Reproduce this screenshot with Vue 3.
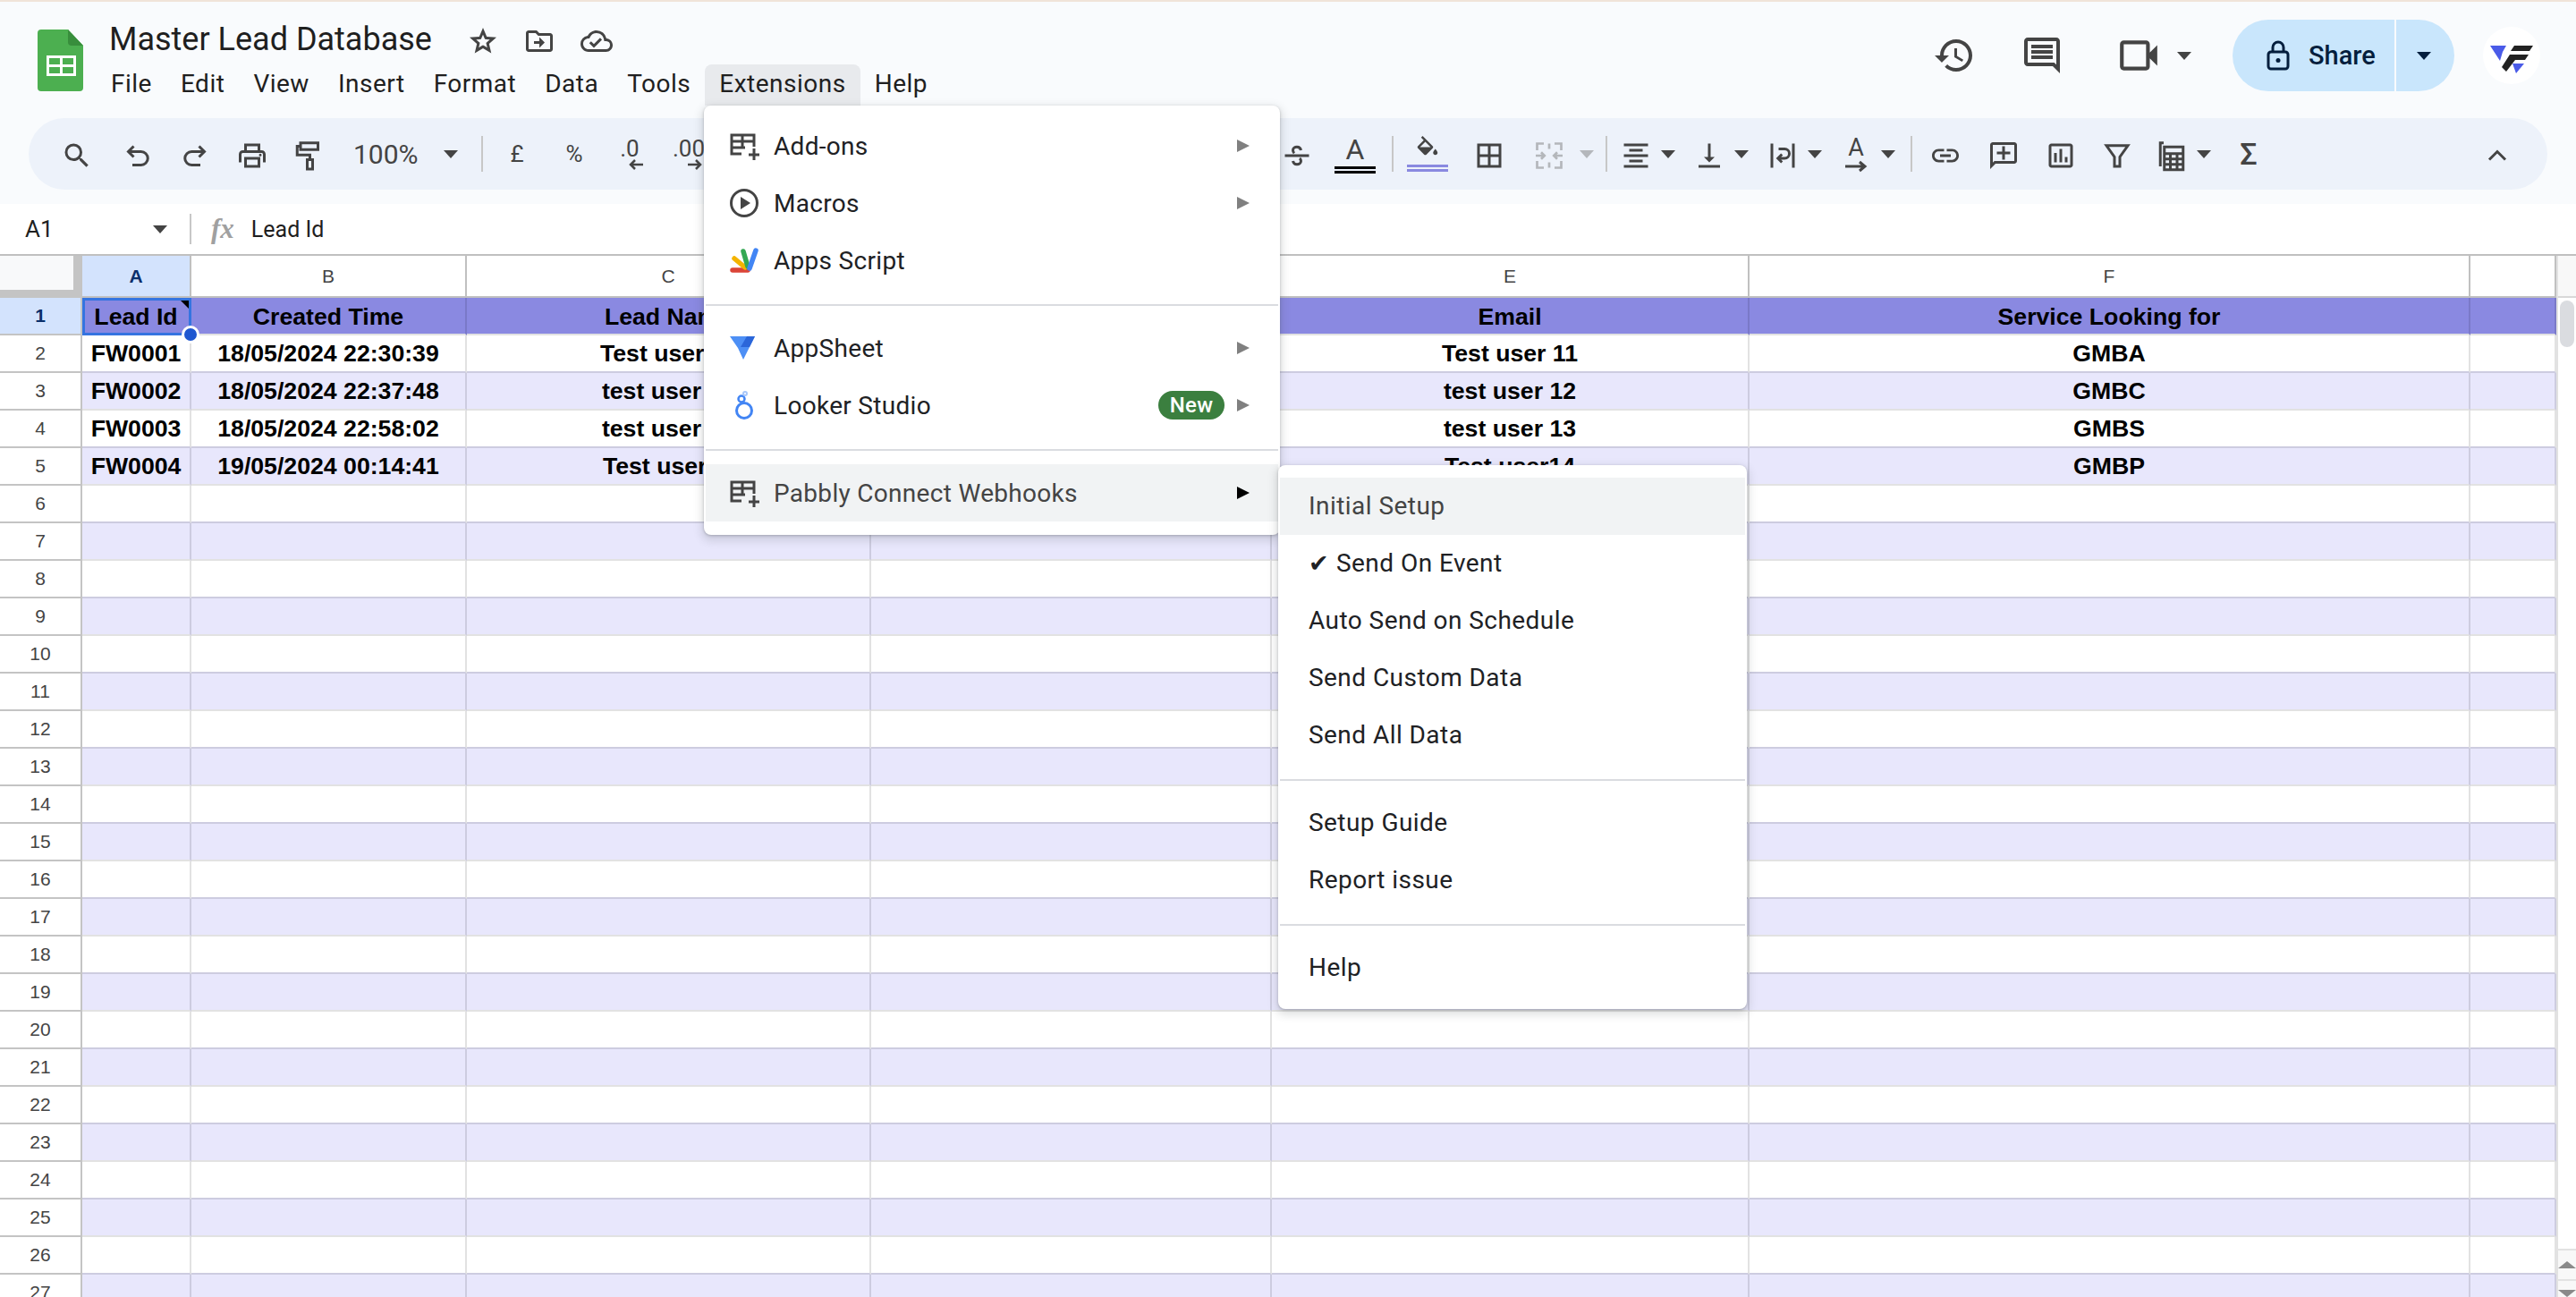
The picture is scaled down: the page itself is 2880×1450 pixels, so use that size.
<script setup>
const navItems = ['File', 'Edit', 'View', 'Insert', 'Format', 'Data', 'Tools', 'Extensions', 'Help']

const icons = {
  search: 'M15.5 14h-.79l-.28-.27A6.471 6.471 0 0 0 16 9.5 6.5 6.5 0 1 0 9.5 16c1.61 0 3.09-.59 4.23-1.57l.27.28v.79l5 4.99L20.49 19l-4.99-5zm-6 0C7.01 14 5 11.99 5 9.5S7.01 5 9.5 5 14 7.01 14 9.5 11.99 14 9.5 14z',
  print: 'M19 8h-1V3H6v5H5c-1.66 0-3 1.34-3 3v6h4v4h12v-4h4v-6c0-1.66-1.34-3-3-3zM8 5h8v3H8V5zm8 14H8v-4h8v4zm2-2v-4H6v4H4v-6c0-.55.45-1 1-1h14c.55 0 1 .45 1 1v6h-2zm0-6.5a1 1 0 1 0 0 2 1 1 0 0 0 0-2z',
  fill: 'M16.56 8.94L7.62 0 6.21 1.41l2.38 2.38-5.15 5.15c-.59.59-.59 1.54 0 2.12l5.5 5.5c.29.29.68.44 1.06.44s.77-.15 1.06-.44l5.5-5.5c.59-.58.59-1.53 0-2.12zM5.21 10L10 5.21 14.79 10H5.21zM19 11.5s-2 2.17-2 3.5c0 1.1.9 2 2 2s2-.9 2-2c0-1.33-2-3.5-2-3.5z',
  borders: 'M3 3v18h18V3H3zm8 16H5v-6h6v6zm0-8H5V5h6v6zm8 8h-6v-6h6v6zm0-8h-6V5h6v6z',
  align: 'M7 15v2h10v-2H7zm-4 6h18v-2H3v2zm0-8h18v-2H3v2zm4-6v2h10V7H7zM3 3v2h18V3H3z',
  valign: 'M16 13h-3V3h-2v10H8l4 4 4-4zM4 19v2h16v-2H4z',
  link: 'M3.9 12c0-1.71 1.39-3.1 3.1-3.1h4V7H7c-2.76 0-5 2.24-5 5s2.24 5 5 5h4v-1.9H7c-1.71 0-3.1-1.39-3.1-3.1zM8 13h8v-2H8v2zm9-6h-4v1.9h4c1.71 0 3.1 1.39 3.1 3.1s-1.39 3.1-3.1 3.1h-4V17h4c2.76 0 5-2.24 5-5s-2.24-5-5-5z',
  comment: 'M2 4c0-1.1.9-2 2-2h16c1.1 0 2 .9 2 2v12c0 1.1-.9 2-2 2H6l-4 4V4zm2 13.17L5.17 16H20V4H4v13.17zM11 5h2v4h4v2h-4v4h-2v-4H7V9h4z',
  chart: 'M19 3H5c-1.1 0-2 .9-2 2v14c0 1.1.9 2 2 2h14c1.1 0 2-.9 2-2V5c0-1.1-.9-2-2-2zm0 16H5V5h14v14zM7 10h2v7H7zm4-3h2v10h-2zm4 6h2v4h-2z',
  history: 'M13 3c-4.97 0-9 4.03-9 9H1l3.89 3.89.07.14L9 12H6c0-3.87 3.13-7 7-7s7 3.13 7 7-3.13 7-7 7c-1.93 0-3.68-.79-4.94-2.06l-1.42 1.42C8.27 19.99 10.51 21 13 21c4.97 0 9-4.03 9-9s-4.03-9-9-9zm-1 5v5l4.28 2.54.72-1.21-3.5-2.08V8H12z',
  chat: 'M21.99 4c0-1.1-.89-2-1.99-2H4c-1.1 0-2 .9-2 2v12c0 1.1.9 2 2 2h14l4 4-.01-18zM20 4v13.17L18.83 16H4V4h16zM6 12h12v2H6zm0-3h12v2H6zm0-3h12v2H6z',
  meet: 'M18 10.48V6c0-1.1-.9-2-2-2H4c-1.1 0-2 .9-2 2v12c0 1.1.9 2 2 2h12c1.1 0 2-.9 2-2v-4.48l4 3.98v-11l-4 3.98zm-2-.79V18H4V6h12v3.69z',
  star: 'M12 7.13l.97 2.29.47 1.11 1.2.1 2.47.21-1.88 1.63-.91.79.27 1.18.56 2.41-2.12-1.28-1.03-.64-1.03.62-2.12 1.28.56-2.41.27-1.18-.91-.79-1.88-1.63 2.47-.21 1.2-.1.47-1.11.97-2.27M12 2L9.19 8.63 2 9.24l5.46 4.73L5.82 21 12 17.27 18.18 21l-1.64-7.03L22 9.24l-7.19-.61L12 2z',
  move: 'M20 6h-8l-2-2H4c-1.1 0-2 .9-2 2v12c0 1.1.9 2 2 2h16c1.1 0 2-.9 2-2V8c0-1.1-.9-2-2-2zm0 12H4V6h5.17l2 2H20v10zm-8-4H8v-2h4V9l4 4-4 4v-3z',
  cloud: 'M19.35 10.04A7.49 7.49 0 0 0 12 4C9.11 4 6.6 5.64 5.35 8.04A5.994 5.994 0 0 0 0 14c0 3.31 2.69 6 6 6h13c2.76 0 5-2.24 5-5 0-2.64-2.05-4.78-4.65-4.96zM19 18H6c-2.21 0-4-1.79-4-4 0-2.05 1.53-3.76 3.56-3.97l1.07-.11.5-.95A5.469 5.469 0 0 1 12 6c2.62 0 4.88 1.86 5.39 4.43l.3 1.5 1.53.11A2.98 2.98 0 0 1 22 15c0 1.65-1.35 3-3 3zm-9-3.82l-2.09-2.09L6.5 13.5 10 17l6.01-6.01-1.41-1.41z'
}

// stroked icons, these have no good filled shape
const strokes = {
  undo: 'M9 5L5 9l4 4M5 9h9.5a5 5 0 0 1 0 10H8',
  redo: 'M15 5l4 4-4 4M19 9H9.5a5 5 0 0 0 0 10H16',
  paint: 'M6 2.5h13v5H6zM6 5H3.5v6.5H13V15M11 15h4v7h-4z',
  strike: 'M15 8c-.3-1.500-1.500-2.500-3-2.500S9 6.500 9 8c0 1 .5 1.700 1 2.200M3 12h18M14 14c.6.5 1 1.200 1 2 0 1.500-1.500 2.500-3 2.500s-2.700-1-3-2.500',
  merge: 'M8 3H3v5M16 3h5v5M21 16v5h-5M8 21H3v-5M2 12h6M6 9.5L8.5 12 6 14.5M22 12h-6M18 9.5L15.500 12l2.500 2.500M12 3v4M12 17v4',
  wrap: 'M4 3v18M20 3v18M9 7h4.500a3.500 3.500 0 0 1 0 7H9M11.500 11L8.500 14l3 3',
  filter: 'M4 4.500h16L14 13v7h-4v-7z',
  calc: 'M6 2.500H3.500V20M6.500 5.500h14v17h-14zM6.500 10.500h14M11 10.500v12M16 10.500v12M6.500 14.500h14M6.500 18.500h14',
  chevron: 'M6 15l6-6 6 6'
}

const toolbarLeft = [
  { kind: 'icon', name: 'search', w: 64 },
  { kind: 'stroke', name: 'undo', w: 72 },
  { kind: 'stroke', name: 'redo', w: 56 },
  { kind: 'icon', name: 'print', w: 72 },
  { kind: 'stroke', name: 'paint', w: 54 }
]

const toolbarRight = [
  { kind: 'stroke', name: 'strike', w: 64 },
  { kind: 'color', w: 66, tone: 'ink', label: 'A' },
  { kind: 'sep', w: 18 },
  { kind: 'fill', w: 60 },
  { kind: 'icon', name: 'borders', w: 78 },
  { kind: 'stroke', name: 'merge', w: 56, muted: true },
  { kind: 'caret', w: 28, muted: true },
  { kind: 'sep', w: 15 },
  { kind: 'icon', name: 'align', w: 52 },
  { kind: 'caret', w: 20 },
  { kind: 'gap', w: 10 },
  { kind: 'icon', name: 'valign', w: 52 },
  { kind: 'caret', w: 20 },
  { kind: 'gap', w: 10 },
  { kind: 'stroke', name: 'wrap', w: 52 },
  { kind: 'caret', w: 20 },
  { kind: 'gap', w: 10 },
  { kind: 'rotate', w: 52 },
  { kind: 'caret', w: 20 },
  { kind: 'gap', w: 10 },
  { kind: 'sep', w: 12 },
  { kind: 'icon', name: 'link', w: 64 },
  { kind: 'icon', name: 'comment', w: 66 },
  { kind: 'icon', name: 'chart', w: 62 },
  { kind: 'stroke', name: 'filter', w: 64 },
  { kind: 'stroke', name: 'calc', w: 58 },
  { kind: 'caret', w: 14 },
  { kind: 'sigma', w: 86 }
]

const columns = [
  { key: 'A', w: 122, active: true },
  { key: 'B', w: 308 },
  { key: 'C', w: 452 },
  { key: 'D', w: 448 },
  { key: 'E', w: 534 },
  { key: 'F', w: 806 },
  { key: 'G', w: 96, blank: true }
]

const data = [
  ['Lead Id', 'Created Time', 'Lead Name', '', 'Email', 'Service Looking for', ''],
  ['FW0001', '18/05/2024 22:30:39', 'Test user 11', '', 'Test user 11', 'GMBA', ''],
  ['FW0002', '18/05/2024 22:37:48', 'test user 12', '', 'test user 12', 'GMBC', ''],
  ['FW0003', '18/05/2024 22:58:02', 'test user 13', '', 'test user 13', 'GMBS', ''],
  ['FW0004', '19/05/2024 00:14:41', 'Test user14', '', 'Test user14', 'GMBP', '']
]

const rows = Array.from({ length: 27 }, (_, i) => ({ n: i + 1, cells: data[i] || [] }))

const extMenu = [
  [
    { label: 'Add-ons', icon: 'addon', arrow: true },
    { label: 'Macros', icon: 'macro', arrow: true },
    { label: 'Apps Script', icon: 'script' }
  ],
  [
    { label: 'AppSheet', icon: 'appsheet', arrow: true },
    { label: 'Looker Studio', icon: 'looker', arrow: true, badge: 'New' }
  ],
  [{ label: 'Pabbly Connect Webhooks', icon: 'addon', arrow: true, active: true }]
]

const subMenu = [
  [
    { label: 'Initial Setup', active: true },
    { label: 'Send On Event', check: true },
    { label: 'Auto Send on Schedule' },
    { label: 'Send Custom Data' },
    { label: 'Send All Data' }
  ],
  [{ label: 'Setup Guide' }, { label: 'Report issue' }],
  [{ label: 'Help' }]
]
</script>

<template>
  <div class="app">
    <header class="topbar">
      <svg class="sheets-logo" width="51" height="69" viewBox="0 0 51 69">
        <path fill="#4caf50" d="M4 0h30l17 18v47a4 4 0 0 1-4 4H4a4 4 0 0 1-4-4V4a4 4 0 0 1 4-4z" />
        <path fill="#388e3c" d="M34 0v14a4 4 0 0 0 4 4h13z" />
        <path fill="#fff" d="M10 29h33v23H10zm3 3v7h12v-7zm15 0v7h12v-7zM13 42v7h12v-7zm15 0v7h12v-7z" fill-rule="evenodd" />
      </svg>
      <div class="title-block">
        <div class="title-row">
          <span class="doc-title">Master Lead Database</span>
          <svg class="title-icon star" viewBox="0 0 24 24"><path :d="icons.star" /></svg>
          <svg class="title-icon" viewBox="0 0 24 24"><path :d="icons.move" /></svg>
          <svg class="title-icon" viewBox="0 0 24 24"><path :d="icons.cloud" /></svg>
        </div>
        <nav class="nav">
          <span
            v-for="item in navItems"
            :key="item"
            class="nav-item"
            :class="{ open: item === 'Extensions' }"
          >{{ item }}</span>
        </nav>
      </div>
      <div class="actions">
        <svg class="action-icon history" viewBox="0 0 24 24"><path :d="icons.history" /></svg>
        <svg class="action-icon chat" viewBox="0 0 24 24"><path :d="icons.chat" /></svg>
        <svg class="action-icon meet" viewBox="0 0 24 24"><path :d="icons.meet" /></svg>
        <span class="caret meet-caret"></span>
        <div class="share">
          <div class="share-main">
            <svg class="lock" width="26" height="34" viewBox="0 0 26 34">
              <rect x="2" y="13" width="22" height="19" rx="3" fill="none" stroke="#041e3d" stroke-width="3" />
              <path d="M7 13V8a6 6 0 0 1 12 0v5" fill="none" stroke="#041e3d" stroke-width="3" />
              <circle cx="13" cy="22.500" r="2.500" fill="#041e3d" />
            </svg>
            <span>Share</span>
          </div>
          <div class="share-drop"><span class="caret dark"></span></div>
        </div>
        <div class="avatar">
          <svg width="64" height="64" viewBox="0 0 64 64">
            <polygon fill="#4a5be8" points="8,21 26,21 22,28 19,38" />
            <polygon fill="#222" points="35,21 56,21 52,27 31,27" />
            <polygon fill="#222" points="30,31 51,31 47,37 36,37 26,50 21,45" />
            <polygon fill="#4a5be8" points="33,41 46,41 37,52" />
          </svg>
        </div>
      </div>
    </header>

    <div class="toolbar-wrap">
      <div class="toolbar">
        <template v-for="item in toolbarLeft" :key="item.name">
          <div class="tool" :style="{ width: item.w + 'px' }">
            <svg v-if="item.kind === 'icon'" class="tool-svg" viewBox="0 0 24 24"><path :d="icons[item.name]" /></svg>
            <svg v-else class="tool-svg line" viewBox="0 0 24 24"><path :d="strokes[item.name]" /></svg>
          </div>
        </template>
        <div class="zoom-box">
          <span>100%</span>
          <span class="caret"></span>
        </div>
        <div class="tool" style="width: 24px"><span class="sep"></span></div>
        <div class="tool tool-text" style="width: 54px">£</div>
        <div class="tool tool-text" style="width: 74px">%</div>
        <div class="tool decimal" style="width: 50px">
          <span>.0</span>
          <svg width="20" height="12" viewBox="0 0 20 12"><path d="M18 6H4M9 1L4 6l5 5" fill="none" stroke="#444" stroke-width="2.500" /></svg>
        </div>
        <div class="tool decimal" style="width: 82px">
          <span>.00</span>
          <svg width="20" height="12" viewBox="0 0 20 12"><path d="M2 6h14M11 1l5 5-5 5" fill="none" stroke="#444" stroke-width="2.500" /></svg>
        </div>
        <div class="tool-hidden"></div>
        <template v-for="(item, i) in toolbarRight" :key="i">
          <div class="tool" :style="{ width: item.w + 'px' }">
            <svg v-if="item.kind === 'icon'" class="tool-svg" viewBox="0 0 24 24"><path :d="icons[item.name]" /></svg>
            <svg v-else-if="item.kind === 'stroke'" class="tool-svg line" :class="{ muted: item.muted }" viewBox="0 0 24 24"><path :d="strokes[item.name]" /></svg>
            <span v-else-if="item.kind === 'caret'" class="caret" :class="{ muted: item.muted }"></span>
            <span v-else-if="item.kind === 'sep'" class="sep"></span>
            <span v-else-if="item.kind === 'sigma'" class="sigma">Σ</span>
            <div v-else-if="item.kind === 'color'" class="color-a">
              <span>A</span>
              <i class="bar"></i>
              <i class="bar"></i>
            </div>
            <div v-else-if="item.kind === 'fill'" class="color-a">
              <svg width="30" height="30" viewBox="0 0 24 24"><path :d="icons.fill" fill="#444" /></svg>
              <i class="bar purple"></i>
              <i class="bar purple"></i>
            </div>
            <div v-else-if="item.kind === 'rotate'" class="rotate-a">
              <span>A</span>
              <svg width="26" height="14" viewBox="0 0 26 14"><path d="M1 7h21M17 2l6 5-6 5" fill="none" stroke="#444" stroke-width="3" /></svg>
            </div>
          </div>
        </template>
        <div class="tool-spring"></div>
        <div class="tool chevron-tool">
          <svg class="tool-svg line" viewBox="0 0 24 24"><path :d="strokes.chevron" /></svg>
        </div>
      </div>
    </div>

    <div class="formula">
      <div class="name-box">
        <span>A1</span>
        <span class="caret"></span>
      </div>
      <span class="formula-sep"></span>
      <span class="fx">fx</span>
      <span class="formula-value">Lead Id</span>
    </div>

    <div class="sheet">
      <div class="grid">
        <div class="col-head">
          <div class="corner"><div class="corner-inner"></div></div>
          <div
            v-for="col in columns"
            :key="col.key"
            class="col-cell"
            :class="{ active: col.active }"
            :style="{ width: col.w + 'px' }"
          >{{ col.blank ? '' : col.key }}</div>
        </div>
        <div
          v-for="row in rows"
          :key="row.n"
          class="row"
          :class="{ head: row.n === 1, band: row.n > 1 && row.n % 2 === 1 }"
        >
          <div class="row-num">{{ row.n }}</div>
          <div
            v-for="(col, c) in columns"
            :key="col.key"
            class="cell"
            :style="{ width: col.w + 'px' }"
          >
            {{ row.cells[c] }}
            <template v-if="row.n === 1 && c === 0">
              <span class="selection"></span>
              <span class="note"></span>
              <span class="handle"></span>
            </template>
          </div>
        </div>
      </div>
      <div class="scroll">
        <div class="scroll-cap"></div>
        <div class="scroll-track"><div class="thumb"></div></div>
        <div class="scroll-btn"><span class="tri up"></span></div>
        <div class="scroll-btn last"><span class="tri"></span></div>
      </div>
    </div>

    <div class="menu ext-menu">
      <template v-for="(group, g) in extMenu" :key="g">
        <div v-if="g > 0" class="divider"></div>
        <div
          v-for="item in group"
          :key="item.label"
          class="menu-item"
          :class="{ active: item.active }"
        >
          <span class="menu-icon">
            <svg v-if="item.icon === 'addon'" width="34" height="34" viewBox="0 0 34 34" fill="none" stroke="#444" stroke-width="3">
              <path d="M14 26H3V5h25v13M3 12h25M3 19h15M15 5v14" />
              <path d="M28 20v13M22 27h12" />
            </svg>
            <svg v-else-if="item.icon === 'macro'" width="34" height="34" viewBox="0 0 34 34">
              <circle cx="17" cy="17" r="14.500" fill="none" stroke="#444" stroke-width="3" />
              <polygon points="13,10 24,17 13,24" fill="#444" />
            </svg>
            <svg v-else-if="item.icon === 'script'" width="34" height="30" viewBox="0 0 34 30" fill="none" stroke-width="5.500" stroke-linecap="round">
              <path d="M4 26h17" stroke="#db4437" />
              <path d="M6 13l12 10" stroke="#f4b400" />
              <path d="M16 5l5 17" stroke="#34a853" />
              <path d="M30 4l-7 20" stroke="#4285f4" />
            </svg>
            <svg v-else-if="item.icon === 'appsheet'" width="30" height="26" viewBox="0 0 30 26">
              <polygon fill="#4d8ff5" points="1,0 29,0 16,26 10,13" />
              <polygon fill="#2b66d9" points="20,0 29,0 23,12 13,12" />
            </svg>
            <svg v-else-if="item.icon === 'looker'" width="34" height="34" viewBox="0 0 34 34" fill="none" stroke="#4285f4">
              <circle cx="17" cy="23" r="8.500" stroke-width="3" />
              <circle cx="14" cy="10" r="3.500" stroke-width="2.500" />
              <circle cx="18" cy="4" r="2" stroke="#a8c7fa" stroke-width="2" />
            </svg>
          </span>
          <span class="menu-label">{{ item.label }}</span>
          <span v-if="item.badge" class="badge">{{ item.badge }}</span>
          <span v-if="item.arrow" class="menu-arrow"></span>
        </div>
      </template>
    </div>

    <div class="menu sub-menu">
      <template v-for="(group, g) in subMenu" :key="g">
        <div v-if="g > 0" class="divider"></div>
        <div
          v-for="item in group"
          :key="item.label"
          class="menu-item sub"
          :class="{ active: item.active }"
        >
          <span v-if="item.check" class="check">✔</span>
          {{ item.label }}
        </div>
      </template>
    </div>
  </div>
</template>

<style scoped>
.app {
  position: relative;
  width: 2880px;
  height: 1450px;
  overflow: hidden;
  display: flex;
  flex-direction: column;
  background: #fff;
  font-family: Roboto, "Liberation Sans", sans-serif;
  color: #202124;
}

.topbar {
  height: 132px;
  flex: none;
  box-sizing: border-box;
  border-top: 2px solid #f0e4d9;
  background: #f9fbfd;
  display: flex;
  padding-left: 42px;
}

.sheets-logo {
  margin-top: 31px;
  flex: none;
}

.title-block {
  margin-left: 15px;
}

.title-row {
  display: flex;
  align-items: center;
  height: 44px;
  margin-top: 21px;
  padding-left: 14px;
}

.doc-title {
  font-size: 36px;
  width: 361px;
  color: #1f1f1f;
  white-space: nowrap;
  position: relative;
  top: -1px;
}

.title-icon {
  width: 36px;
  height: 36px;
  fill: #444;
  margin-right: 28px;
  position: relative;
  top: 1px;
}

.title-icon.star {
  margin-left: 39px;
  margin-right: 27px;
}

.nav {
  display: flex;
  margin-top: 5px;
}

.nav-item {
  font-size: 28px;
  letter-spacing: 0.5px;
  height: 46px;
  line-height: 44px;
  padding: 0 16px;
  color: #1f1f1f;
}

.nav-item.open {
  background: #e8eaed;
  border-radius: 8px 8px 0 0;
}

.actions {
  margin-left: auto;
  display: flex;
  align-items: center;
  height: 80px;
  margin-top: 20px;
}

.action-icon {
  fill: #444;
  flex: none;
}

.history {
  width: 48px;
  height: 48px;
}

.chat {
  width: 48px;
  height: 48px;
  margin-left: 50px;
}

.meet {
  width: 50px;
  height: 50px;
  margin-left: 59px;
}

.meet-caret {
  margin-left: 18px;
}

.share {
  margin-left: 46px;
  height: 80px;
  width: 248px;
  display: flex;
  color: #041e3d;
  font-size: 29px;
  font-weight: 500;
}

.share-main {
  width: 181px;
  box-sizing: border-box;
  background: #c9e6fc;
  border-radius: 40px 0 0 40px;
  padding-left: 38px;
  display: flex;
  align-items: center;
  gap: 21px;
}

.share-drop {
  flex: 1;
  margin-left: 2px;
  background: #c9e6fc;
  border-radius: 0 40px 40px 0;
  display: flex;
  align-items: center;
  padding-left: 23px;
}

.avatar {
  margin-left: 32px;
  margin-right: 40px;
  width: 64px;
  height: 64px;
  border-radius: 50%;
  background: #fff;
}

.caret {
  display: inline-block;
  width: 0;
  height: 0;
  border-left: 8px solid transparent;
  border-right: 8px solid transparent;
  border-top: 9px solid #444;
}

.caret.dark {
  border-top-color: #041e3d;
}

.caret.muted {
  border-top-color: #b4b7bb;
}

.toolbar-wrap {
  height: 96px;
  flex: none;
  box-sizing: border-box;
  padding: 0 32px;
  background: #f9fbfd;
}

.toolbar {
  height: 80px;
  border-radius: 40px;
  background: #edf2fa;
  display: flex;
  align-items: center;
  padding: 0 24px 0 22px;
}

.tool {
  flex: none;
  height: 80px;
  display: flex;
  align-items: center;
  justify-content: center;
  color: #444;
}

.chevron-tool {
  width: 64px;
}

.tool-svg {
  width: 36px;
  height: 36px;
  fill: #444;
  margin-top: 4px;
}

.tool-svg.line {
  fill: none;
  stroke: #444;
  stroke-width: 2;
}

.tool-svg.line.muted {
  stroke: #b4b7bb;
  stroke-width: 1.800;
}

.tool-text {
  font-size: 26px;
}

.tool-hidden {
  flex: none;
  width: 607px;
}

.tool-spring {
  flex: 1;
}

.zoom-box {
  flex: none;
  width: 155px;
  box-sizing: border-box;
  padding-left: 23px;
  display: flex;
  align-items: center;
  justify-content: space-between;
  padding-right: 15px;
  font-size: 30px;
  color: #444;
}

.sep {
  display: block;
  width: 2px;
  height: 40px;
  background: #c7c7c7;
}

.decimal {
  flex-direction: column;
  font-size: 26px;
  line-height: 24px;
}

.decimal svg {
  margin-left: 14px;
}

.sigma {
  font-size: 34px;
  font-weight: 500;
  color: #444;
}

.color-a {
  display: flex;
  flex-direction: column;
  align-items: center;
  gap: 2px;
  font-size: 32px;
  line-height: 34px;
  color: #444;
}

.bar {
  display: block;
  width: 46px;
  height: 3px;
  background: #000;
}

.bar.purple {
  background: #8989e0;
}

.rotate-a {
  display: flex;
  flex-direction: column;
  align-items: center;
  font-size: 27px;
  line-height: 28px;
  color: #444;
}

.formula {
  height: 58px;
  flex: none;
  box-sizing: border-box;
  border-bottom: 2px solid #c0c0c0;
  display: flex;
  align-items: center;
  font-size: 26px;
  color: #1f1f1f;
}

.name-box {
  width: 212px;
  box-sizing: border-box;
  padding: 0 25px 0 28px;
  display: flex;
  justify-content: space-between;
  align-items: center;
}

.formula-sep {
  width: 2px;
  height: 34px;
  background: #c7c7c7;
}

.fx {
  margin-left: 22px;
  font-family: "Liberation Serif", serif;
  font-style: italic;
  font-weight: 700;
  font-size: 31px;
  color: #a0a0a0;
}

.formula-value {
  margin-left: 19px;
  font-size: 25px;
}

.sheet {
  flex: 1;
  min-height: 0;
  display: flex;
  overflow: hidden;
}

.grid {
  width: 2858px;
  flex: none;
  font-family: "Liberation Sans", Arial, sans-serif;
}

.col-head {
  display: flex;
  height: 47px;
  box-sizing: border-box;
}

.corner {
  width: 92px;
  flex: none;
  height: 47px;
  background: #c4c4c4;
}

.corner-inner {
  width: 82px;
  height: 38px;
  background: #f8f9fa;
}

.col-cell {
  flex: none;
  box-sizing: border-box;
  border-right: 2px solid #c0c0c0;
  border-bottom: 2px solid #c0c0c0;
  display: flex;
  align-items: center;
  justify-content: center;
  font-size: 21px;
  color: #444;
  background: #fff;
}

.col-cell.active {
  background: #d3e3fd;
  font-weight: 700;
  color: #0b2f6b;
}

.row {
  display: flex;
  height: 42px;
}

.row-num {
  width: 92px;
  flex: none;
  box-sizing: border-box;
  border-right: 2px solid #c4c4c4;
  border-bottom: 2px solid #c4c4c4;
  display: flex;
  align-items: center;
  justify-content: center;
  font-size: 21px;
  color: #444;
  background: #fff;
}

.cell {
  position: relative;
  flex: none;
  box-sizing: border-box;
  border-right: 2px solid #e2e2e2;
  border-bottom: 2px solid #cdcce0;
  display: flex;
  align-items: center;
  justify-content: center;
  font-size: 26.67px;
  font-weight: 700;
  color: #000;
  white-space: nowrap;
  background: #fff;
}

.row.band .cell {
  background: #e8e7fc;
  border-right-color: #cdcce0;
  border-bottom-color: #e2e2e2;
}

.row.head .cell {
  background: #8a89e1;
  border-right-color: #7a79c8;
  border-bottom-color: #e2e2e2;
  padding-top: 2px;
}

.row.head .row-num {
  background: #d3e3fd;
  font-weight: 700;
  color: #0b2f6b;
}

.selection {
  position: absolute;
  left: 0;
  top: 0;
  right: -2px;
  bottom: -2px;
  border: 3px solid #3574e0;
}

.note {
  position: absolute;
  top: 3px;
  right: 1px;
  width: 0;
  height: 0;
  border-top: 9px solid #000;
  border-left: 9px solid transparent;
}

.handle {
  position: absolute;
  z-index: 2;
  right: -11px;
  bottom: -11px;
  width: 14px;
  height: 14px;
  border-radius: 50%;
  border: 3px solid #fff;
  background: #1f57d0;
}

.scroll {
  flex: 1;
  display: flex;
  flex-direction: column;
  box-sizing: border-box;
  border-left: 2px solid #e2e2e2;
}

.scroll-cap {
  height: 47px;
  box-sizing: border-box;
  background: #f8f8f8;
  border-bottom: 2px solid #d8d8d8;
}

.scroll-track {
  flex: 1;
  padding: 3px 2px 0 2px;
}

.thumb {
  height: 52px;
  border-radius: 9px;
  background: #dadce0;
}

.scroll-btn {
  height: 32px;
  flex: none;
  background: #f8f8f8;
  border-top: 2px solid #e2e2e2;
  display: flex;
  align-items: center;
  justify-content: center;
}

.scroll-btn.last {
  height: 18px;
  align-items: flex-end;
}

.tri {
  width: 0;
  height: 0;
  border-left: 10px solid transparent;
  border-right: 10px solid transparent;
  border-top: 8px solid #8a8a8a;
}

.tri.up {
  border-top: 0;
  border-bottom: 8px solid #8a8a8a;
}

.menu {
  position: absolute;
  z-index: 5;
  box-sizing: border-box;
  background: #fff;
  border-radius: 8px;
  box-shadow: 0 4px 10px 3px rgba(60, 64, 67, 0.15), 0 1px 3px rgba(60, 64, 67, 0.3);
  font-size: 28px;
  letter-spacing: 0.3px;
  color: #202124;
}

.ext-menu {
  left: 787px;
  top: 118px;
  width: 644px;
  height: 480px;
  padding: 13px 2px 15px;
}

.sub-menu {
  left: 1429px;
  top: 520px;
  width: 524px;
  height: 608px;
  padding: 14px 2px 15px;
  letter-spacing: 0.45px;
  z-index: 6;
}

.menu-item {
  height: 64px;
  display: flex;
  align-items: center;
  padding-left: 26px;
}

.menu-item.sub {
  padding-left: 32px;
  padding-bottom: 2px;
  box-sizing: border-box;
}

.menu-item.active {
  background: #f1f3f4;
  color: #444;
}

.check {
  width: 31px;
  flex: none;
  font-family: "DejaVu Sans", sans-serif;
  font-size: 27px;
  letter-spacing: 0;
}

.menu-icon {
  width: 50px;
  flex: none;
  display: flex;
  align-items: center;
}

.menu-label {
  flex: 1;
}

.badge {
  background: #3b7f3f;
  color: #fff;
  font-size: 24px;
  font-weight: 500;
  height: 32px;
  line-height: 32px;
  width: 74px;
  text-align: center;
  border-radius: 16px;
  margin-right: 14px;
}

.menu-arrow {
  width: 0;
  height: 0;
  margin-right: 32px;
  border-top: 7px solid transparent;
  border-bottom: 7px solid transparent;
  border-left: 14px solid #808080;
}

.menu-item.active .menu-arrow {
  border-left-color: #000;
}

.divider {
  height: 2px;
  background: #dadce0;
  margin: 17px 0 15px;
}
</style>
